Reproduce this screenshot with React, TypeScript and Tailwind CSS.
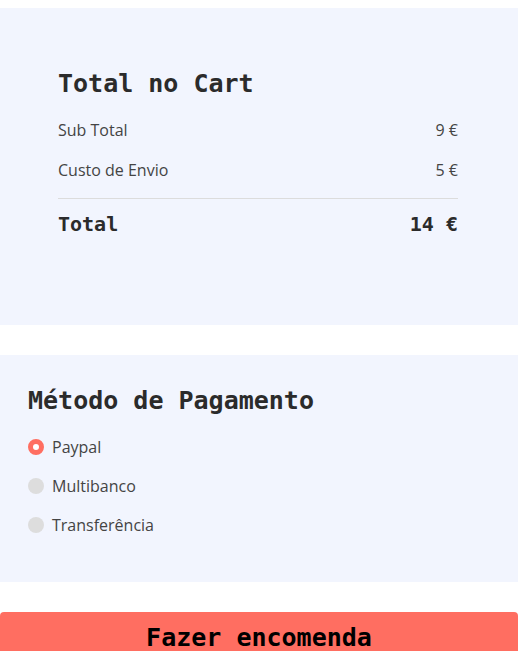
const mono = "font-['DejaVu_Sans_Mono',monospace]";

const rows = [
  { label: "Sub Total", value: "9 €" },
  { label: "Custo de Envio", value: "5 €" },
];

const methods = ["Paypal", "Multibanco", "Transferência"];

export default function App() {
  const selected = "Paypal";

  return (
    <div className="min-h-screen bg-white font-['Open_Sans',sans-serif] text-[#333]">
      <div className="w-[518px] pt-2 flex flex-col">
        {/* Cart totals */}
        <section className="bg-[#f2f5fe] h-[317px] pt-[59px] pl-[58px] pr-[60px]">
          <h2 className={`${mono} text-[25px] leading-[34px] font-bold text-[#2b2b2b]`}>
            Total no Cart
          </h2>
          <div className="mt-[9px]">
            {rows.map((row) => (
              <div
                key={row.label}
                className="flex justify-between items-center h-[40px] text-[16px] text-[#444]"
              >
                <span>{row.label}</span>
                <span>{row.value}</span>
              </div>
            ))}
          </div>
          <div className="mt-[8px] border-t border-[#dcdcdc]" />
          <div
            className={`${mono} flex justify-between items-center h-[50px] text-[20px] font-bold text-[#2b2b2b]`}
          >
            <span>Total</span>
            <span>14 €</span>
          </div>
        </section>

        {/* Payment method */}
        <section className="mt-[30px] bg-[#f2f5fe] h-[227px] pt-[29px] pl-[28px]">
          <h2 className={`${mono} text-[25px] leading-[34px] font-bold text-[#2b2b2b]`}>
            Método de Pagamento
          </h2>
          <div className="mt-[9px] flex flex-col">
            {methods.map((m) => (
              <label key={m} className="flex items-center gap-[8px] h-[39px] text-[16px] text-[#444]">
                {m === selected ? (
                  <span className="w-[16px] h-[16px] rounded-full border-[5px] border-[#ff6e61] bg-white" />
                ) : (
                  <span className="w-[16px] h-[16px] rounded-full bg-[#dddddd]" />
                )}
                <span>{m}</span>
              </label>
            ))}
          </div>
        </section>

        <button
          className={`${mono} mt-[30px] h-[56px] bg-[#ff6e61] rounded-[4px] text-[25px] leading-[34px] font-bold text-black flex justify-center items-start pt-[9px]`}
        >
          Fazer encomenda
        </button>
      </div>
    </div>
  );
}
